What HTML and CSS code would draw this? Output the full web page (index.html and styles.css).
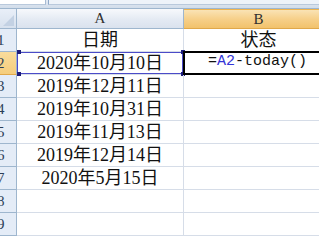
FILE: index.html
```html
<!DOCTYPE html>
<html lang="zh-CN">
<head>
    <meta charset="utf-8" />
    <title>Book1</title>
    <link rel="stylesheet" href="styles.css">
</head>
<body>
    <div class="fbar">
        <div class="namebox"></div>
        <div class="fx"></div>
    </div>

    <div class="grid">
        <!-- column headers -->
        <div class="corner"></div>
        <div class="colhead">A</div>
        <div class="colhead sel">B</div>

        <div class="rowhead"><span>1</span></div>
        <div class="cell">日期</div>
        <div class="cell">状态</div>

        <div class="rowhead sel"><span>2</span></div>
        <div class="cell ref">2020年10月10日<i class="h tl"></i><i class="h bl"></i><i class="h tr"></i><i class="h br"></i></div>
        <div class="cell active"><span class="mono">=<b>A2</b>-today()</span></div>

        <div class="rowhead"><span>3</span></div>
        <div class="cell">2019年12月11日</div>
        <div class="cell"></div>

        <div class="rowhead"><span>4</span></div>
        <div class="cell">2019年10月31日</div>
        <div class="cell"></div>

        <div class="rowhead"><span>5</span></div>
        <div class="cell">2019年11月13日</div>
        <div class="cell"></div>

        <div class="rowhead"><span>6</span></div>
        <div class="cell">2019年12月14日</div>
        <div class="cell"></div>

        <div class="rowhead"><span>7</span></div>
        <div class="cell">2020年5月15日</div>
        <div class="cell"></div>

        <div class="rowhead"><span>8</span></div>
        <div class="cell"></div>
        <div class="cell"></div>

        <div class="rowhead"><span>9</span></div>
        <div class="cell"></div>
        <div class="cell"></div>
    </div>
</body>
</html>
```

FILE: styles.css
```css
html, body {
    margin: 0;
    padding: 0;
    overflow: hidden;
    background: #fff;
}

body {
    font-family: "Liberation Serif", "Noto Sans CJK SC", serif;
    color: #111;
}

/* formula bar strip */
.fbar {
    display: flex;
    height: 9px;
    background: linear-gradient(#e3eaf4, #d2ddea);
    border-bottom: 1px solid #9eb6ce;
    box-sizing: border-box;
}

.namebox {
    width: 45px;
    height: 4px;
    background: #fff;
    border-right: 1px solid #a8bbd3;
    border-bottom: 1px solid #b9c9dc;
}

.fx {
    flex: 1;
    height: 4px;
    margin-left: 2px;
    background: #eef3f9;
    border-left: 1px solid #8fa8c8;
    border-bottom: 1px solid #b9c9dc;
}

.grid {
    display: grid;
    grid-template-columns: 17px 167px 150px;
    grid-template-rows: 20px repeat(9, 23px);
}

.grid > div {
    box-sizing: border-box;
    overflow: hidden;
}

.corner {
    position: relative;
    background: linear-gradient(#e9eff8, #d7e1ee);
    border-right: 1px solid #9eb6ce;
    border-bottom: 1px solid #9eb6ce;
}

.corner::after {
    content: "";
    position: absolute;
    right: 2px;
    bottom: 2px;
    width: 0;
    height: 0;
    border-left: 11px solid transparent;
    border-bottom: 11px solid #c3d1e3;
}

.colhead {
    display: flex;
    align-items: center;
    justify-content: center;
    font-size: 15px;
    color: #303030;
    background: linear-gradient(#f7f9fc, #e4eaf3 55%, #dae2ee);
    border-right: 1px solid #9eb6ce;
    border-bottom: 1px solid #9eb6ce;
}

.colhead.sel {
    background: linear-gradient(#fae3b5, #f6d08a 50%, #f2c26c);
    border-top: 1px solid #f0b550;
    border-bottom-color: #e0a84a;
}

.rowhead {
    display: flex;
    align-items: center;
    font-size: 15px;
    color: #2c3e57;
    background: #e4ecf7;
    border-right: 1px solid #9eb6ce;
    border-bottom: 1px solid #9eb6ce;
}

.rowhead span {
    margin-left: -3px;
}

.rowhead.sel {
    background: linear-gradient(#f9dc9c, #f5cd7c);
    border-bottom-color: #e0a84a;
}

.cell {
    position: relative;
    display: flex;
    align-items: flex-end;
    justify-content: center;
    padding-bottom: 1px;
    font-size: 18px;
    line-height: 20px;
    border-right: 1px solid #d6dde8;
    border-bottom: 1px solid #d6dde8;
}

/* range referenced by the formula */
.cell.ref {
    box-shadow: inset 0 0 0 1px #4b4bc8;
    overflow: visible;
}

.h {
    position: absolute;
    width: 4px;
    height: 4px;
    background: #1d1d7a;
}

.tl { left: 0; top: -2px; }
.bl { left: 0; bottom: -2px; }
.tr { right: -2px; top: -2px; }
.br { right: -2px; bottom: -2px; }

/* cell being edited */
.cell.active {
    border: 2px solid #000;
    border-right: none;
    margin-top: -1px;
    margin-left: -1px;
    z-index: 1;
}

.mono {
    font-family: "Liberation Mono", monospace;
    font-size: 15px;
    margin-left: -4px;
}

.mono b {
    font-weight: normal;
    color: #3434d6;
}
```
